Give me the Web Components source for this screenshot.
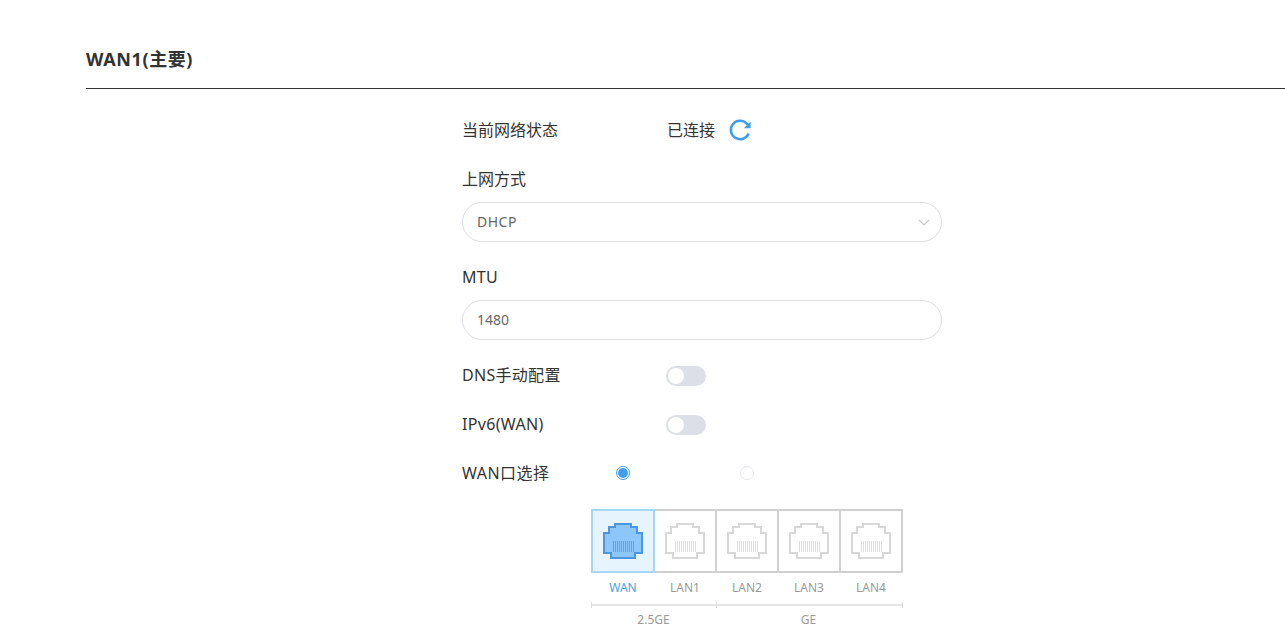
<!DOCTYPE html>
<html lang="zh">
<head>
<meta charset="utf-8">
<title>WAN1</title>
<style>
html,body { margin:0; height:100%; overflow:hidden; background:#fff; }
body { font-family:"Noto Sans","Noto Sans CJK SC",sans-serif; color:#333; }
</style>
</head>
<body>
<wan-page>
   <section-title>WAN1(主要)</section-title>
   <form-row label="当前网络状态" gap="25"><net-status>已连接</net-status></form-row>
   <form-row label="上网方式" gap="25"></form-row>
   <pill-field value="DHCP" spacing=".5" arrow></pill-field>
   <form-row label="MTU" spacing=".3" gap="23"></form-row>
   <pill-field value="1480"></pill-field>
   <form-row label="DNS手动配置" spacing=".3" gap="23"><toggle-switch></toggle-switch></form-row>
   <form-row label="IPv6(WAN)" spacing=".33" gap="25"><toggle-switch></toggle-switch></form-row>
   <wan-radios></wan-radios>
   <port-panel></port-panel>
</wan-page>

<script>
window.customElements.define('wan-page',
   class extends HTMLElement {
      constructor(){super(); this.attachShadow({mode:'open'});
	 this.shadowRoot.innerHTML = `
<style>
:host { display:block; padding:40px 0 0 86px; }
.form { width:480px; margin-left:376px; }
</style>
<slot name="head"></slot>
<div class="form"><slot></slot></div>`;
      }
      connectedCallback(){
	 this.querySelector("section-title").setAttribute("slot","head");
      }
   })

window.customElements.define('section-title',
   class extends HTMLElement {
      constructor(){super(); this.attachShadow({mode:'open'});
	 this.shadowRoot.innerHTML = `
<style>
:host { display:block; height:48px; border-bottom:1px solid #333; margin-bottom:29px;
   font-size:18px; font-weight:700; line-height:38px; letter-spacing:.6px; color:#333; }
</style>
<slot></slot>`;
      }
   })

window.customElements.define('form-row',
   class extends HTMLElement {
      constructor(){super(); this.attachShadow({mode:'open'});
	 this.shadowRoot.innerHTML = `
<style>
:host { display:flex; align-items:center; height:24px; font-size:16px; line-height:24px; color:#333; }
.label { width:204px; flex:none; white-space:nowrap; }
</style>
<span class="label"></span><slot></slot>`;
      }
      connectedCallback(){
	 const label = this.shadowRoot.querySelector(".label");
	 label.textContent = this.getAttribute("label");
	 if(this.hasAttribute("spacing")) label.style.letterSpacing = this.getAttribute("spacing")+"px";
	 this.style.marginTop = this.previousElementSibling ? this.getAttribute("gap")+"px" : "0";
      }
   })

window.customElements.define('net-status',
   class extends HTMLElement {
      constructor(){super(); this.attachShadow({mode:'open'});
	 this.shadowRoot.innerHTML = `
<style>
:host { display:flex; align-items:center; margin-left:1px; }
svg { margin-left:13px; display:block; }
</style>
<slot></slot>
<svg width="24" height="24" viewBox="0 0 24 24" fill="none" stroke="#3f9fe8" stroke-width="2.5">
   <path d="M20.6 15.5A9.2 9.2 0 1 1 18.7 5.6L21 8"/>
   <path d="M22.6 3.4V10.2H15.8Z" fill="#3f9fe8" stroke="none"/>
</svg>`;
      }
   })

window.customElements.define('pill-field',
   class extends HTMLElement {
      constructor(){super(); this.attachShadow({mode:'open'});
	 this.shadowRoot.innerHTML = `
<style>
:host { display:flex; align-items:center; justify-content:space-between; box-sizing:border-box;
   height:40px; margin-top:11px; padding:0 11px 2px 14px; border:1px solid #dcdfe6; border-radius:20px;
   font-size:14px; color:#666; background:#fff; }
svg { display:block; margin-top:2px; }
</style>
<span class="val"></span>
<svg width="12" height="12" viewBox="0 0 12 12" fill="none" stroke="#c8cad0" stroke-width="1.2"><path d="M1 4l5 5 5-5"/></svg>`;
      }
      connectedCallback(){
	 const val = this.shadowRoot.querySelector(".val");
	 val.textContent = this.getAttribute("value");
	 if(this.hasAttribute("spacing")) val.style.letterSpacing = this.getAttribute("spacing")+"px";
	 if(!this.hasAttribute("arrow")) this.shadowRoot.querySelector("svg").remove();
      }
   })

window.customElements.define('toggle-switch',
   class extends HTMLElement {
      constructor(){super(); this.attachShadow({mode:'open'});
	 this.shadowRoot.innerHTML = `
<style>
:host { display:flex; align-items:center; box-sizing:border-box; width:40px; height:20px; padding:2px;
   margin-top:2px; border-radius:10px; background:#dcdfe6; }
i { display:block; width:16px; height:16px; border-radius:50%; background:#fff; }
</style>
<i></i>`;
      }
   })

window.customElements.define('wan-radios',
   class extends HTMLElement {
      constructor(){super(); this.attachShadow({mode:'open'});
	 this.shadowRoot.innerHTML = `
<style>
:host { display:flex; align-items:center; height:24px; margin-top:25px; font-size:16px; line-height:24px; color:#333; }
.label { width:154px; flex:none; letter-spacing:.5px; }
.radio { box-sizing:border-box; width:14px; height:14px; border-radius:50%; border:1px solid #e4e7ed; background:#fff; }
.on { border-color:#409eef; display:flex; align-items:center; justify-content:center; margin-right:110px; }
.on i { display:block; width:10px; height:10px; border-radius:50%; background:#409eef; }
</style>
<span class="label">WAN口选择</span>
<span class="radio on"><i></i></span>
<span class="radio"></span>`;
      }
   })

const rj45 = `
<svg width="40" height="36" viewBox="0 0 40 36" fill="var(--fill)" stroke="var(--line)" stroke-width="2" shape-rendering="crispEdges">
   <path d="M12 1H28V4H34V10H39V30H32V35H8V30H1V10H6V4H12Z"/>
   <path d="M10 18V29M12 18V29M14 18V29M16 18V29M18 18V29M20 18V29M22 18V29M24 18V29M26 18V29M28 18V29M30 18V29" stroke="var(--pin)" stroke-width="1"/>
</svg>`;

window.customElements.define('port-cell',
   class extends HTMLElement {
      constructor(){super(); this.attachShadow({mode:'open'});
	 this.shadowRoot.innerHTML = `
<style>
:host { display:block; width:62px; --fill:#fff; --line:#d8d8d8; --pin:#dedede; }
:host([active]) { --fill:#8cc6fb; --line:#4b96df; --pin:#5aa5ea; }
.box { box-sizing:border-box; height:64px; margin-right:-2px; border:2px solid #d0d0d0;
   display:flex; align-items:center; justify-content:center; background:#fff; }
:host([active]) .box { border-color:#a3d8f6; background:#e6f4fe; position:relative; }
.name { margin-top:6px; padding-left:2px; text-align:center; font-size:12px; line-height:18px; color:#999; }
:host([active]) .name { color:#4a9ff0; }
</style>
<div class="box">${rj45}</div>
<div class="name"><slot></slot></div>`;
      }
   })

window.customElements.define('speed-bracket',
   class extends HTMLElement {
      constructor(){super(); this.attachShadow({mode:'open'});
	 this.shadowRoot.innerHTML = `
<style>
:host { display:block; text-align:center; font-size:12px; line-height:18px; color:#999; }
.bar { box-sizing:border-box; height:6px; border-left:1px solid #dcdcdc; display:flex; align-items:center; margin-bottom:3px; }
:host([end]) .bar { border-right:1px solid #dcdcdc; }
.bar i { display:block; flex:1; height:2px; background:#e6e6e6; }
:host([end]) .txt { padding-right:2px; }
</style>
<div class="bar"><i></i></div>
<div class="txt"><slot></slot></div>`;
      }
   })

window.customElements.define('port-panel',
   class extends HTMLElement {
      constructor(){super(); this.attachShadow({mode:'open'});
	 this.shadowRoot.innerHTML = `
<style>
:host { display:block; width:312px; margin:24px 0 0 129px; }
.ports { display:flex; }
.speed { display:grid; grid-template-columns:125px 187px; margin-top:5px; }
</style>
<div class="ports">
   <port-cell active>WAN</port-cell>
   <port-cell>LAN1</port-cell>
   <port-cell>LAN2</port-cell>
   <port-cell>LAN3</port-cell>
   <port-cell>LAN4</port-cell>
</div>
<div class="speed">
   <speed-bracket>2.5GE</speed-bracket>
   <speed-bracket end>GE</speed-bracket>
</div>`;
      }
   })
</script>
</body>
</html>
